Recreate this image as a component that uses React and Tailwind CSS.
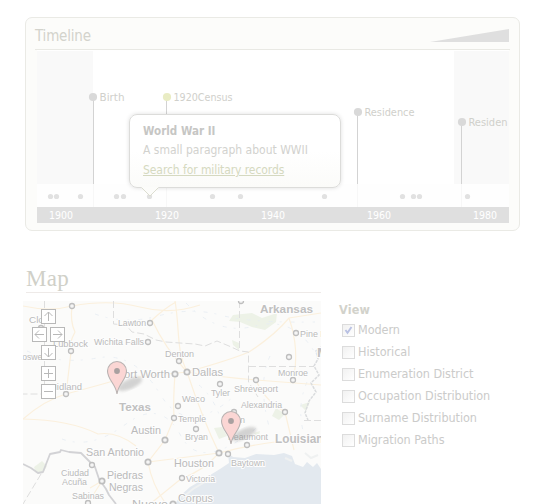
const sans = "font-['DejaVu_Sans_Condensed','DejaVu_Sans',sans-serif] [font-stretch:condensed]";

const events = [
  { x: 93, y: 97, label: 'Birth', w: 25, color: '#d9d9d9' },
  { x: 167, y: 97, label: '1920Census', w: 59, color: '#e9ecc4' },
  { x: 358, y: 112, label: 'Residence', w: 50, color: '#d9d9d9' },
  { x: 462, y: 122, label: 'Residen', w: 39, color: '#d9d9d9' },
];
const dots = [50.5, 56.5, 80.5, 116.5, 123.5, 149.5, 212.5, 240.5, 324.5, 402.5, 413.5, 419.5, 467.5];
const years = [[49, '1900'], [155, '1920'], [261, '1940'], [367, '1960'], [473, '1980']];

function TimelineChart() {
  return (
    <svg className="block font-['DejaVu_Sans_Condensed','DejaVu_Sans',sans-serif] [font-stretch:condensed]" width="472" height="173" viewBox="37 50 472 173">
      <rect x="37" y="50" width="472" height="173" fill="#fff" />
      <rect x="37" y="51" width="56" height="133" fill="#f9f9f9" />
      <rect x="454" y="51" width="55" height="133" fill="#f9f9f9" />
      <rect x="37" y="184" width="472" height="23" fill="#fefefe" />
      <rect x="37" y="207" width="472" height="16" fill="#dfdfdf" />
      {events.map((e) => (
        <g key={e.x}>
          <rect x={e.x === 93 ? 93 : e.x === 167 ? 166 : e.x - 1} y={e.y} width="1" height={184 - e.y} fill="#d3d3d3" />
          <rect x={e.x === 93 ? 93 : e.x - 1} y="184" width="1" height="23" fill="#f7f7f7" />
          <circle cx={e.x} cy={e.y} r="4.1" fill={e.color} />
          <text x={e.x + 6.5} y={e.y + 4} fontSize="11.3" textLength={e.w} lengthAdjust="spacingAndGlyphs" fill="#d0d0cb">{e.label}</text>
        </g>
      ))}
      {dots.map((x) => <circle key={x} cx={x} cy="196.500" r="2.600" fill="#e1e1e1" />)}
      {years.map(([x, y]) => <text key={x} x={x} y="219" fontSize="11.3" textLength="24" lengthAdjust="spacingAndGlyphs" fill="#fff">{y}</text>)}
    </svg>
  );
}

function Callout() {
  return (
    <div className={`absolute left-[103px] top-[96px] h-[74px] w-[212px] rounded-lg border border-[#dcdcda] bg-linear-to-b from-white from-50% to-[#fbfbf9] pl-[13px] pt-[8px] text-[12px] shadow-[0_0_4px_rgba(0,0,0,0.13)] ${sans}`}>
      <p className="h-[18px] text-[11.5px] font-bold leading-[17px] tracking-[0.02px] text-[#c6c6c4]">World War II</p>
      <p className="h-[20px] whitespace-nowrap leading-[18px] text-[#d2d2ce]">A small paragraph about WWII</p>
      <a className="block h-[20px] w-fit whitespace-nowrap leading-[18px] tracking-[-0.08px] text-[#d5d9c0] underline underline-offset-1">Search for military records</a>
      <svg className="absolute left-[10px] top-[72px]" width="20" height="11" viewBox="0 0 20 11">
        <path d="M1 0 L10 9 L19 0Z" fill="#fcfcfa" />
        <path d="M1.500 .5 L10 9 L18.500 .5" fill="none" stroke="#dcddd0" />
      </svg>
    </div>
  );
}

// x, baseline, text width, font size, label, bold
const places = [
  [29, 323, 27, 9.5, 'Clovis'], [118, 326, 28, 9.5, 'Lawton'], [94, 345, 50, 9.5, 'Wichita Falls'],
  [53, 347, 35, 9.5, 'Lubbock'], [16, 360, 30, 9.5, 'Roswell'], [117, 378, 53, 11, 'Fort Worth'],
  [49, 390, 33, 9.5, 'Midland'], [260, 313, 53, 11, 'Arkansas', true], [300, 337, 38, 9.5, 'Pine Bluff'],
  [165, 357, 29, 9.5, 'Denton'], [192, 376, 31, 11, 'Dallas'], [278, 376, 30, 9.5, 'Monroe'],
  [234, 392, 44, 9.5, 'Shreveport'], [211, 396, 19, 9.5, 'Tyler'], [182, 402, 23, 9.5, 'Waco'],
  [119, 411, 32, 11, 'Texas', true], [131, 434, 30, 11, 'Austin'], [86, 456, 58, 11, 'San Antonio'],
  [61, 476, 28, 9, 'Ciudad'], [62, 485, 25, 9, 'Acuña'], [107, 479, 36, 11, 'Piedras'],
  [109, 491, 34, 11, 'Negras'], [72, 499, 32, 9.5, 'Sabinas'], [132, 508, 36, 11, 'Nuevo'],
  [178, 422, 28, 9.5, 'Temple'], [185, 440, 23, 9.5, 'Bryan'], [241, 408, 41, 9.5, 'Alexandria'],
  [228, 440, 40, 9.5, 'Beaumont'], [275, 443, 55, 12, 'Louisiana', true], [174, 467, 40, 11, 'Houston'],
  [231, 466, 34, 9.5, 'Baytown'], [186, 482, 29, 9.5, 'Victoria'], [178, 502, 35, 11, 'Corpus'],
  [240, 423, 5, 9.5, 'n'], [317, 357, 12, 12, 'M', true],
];
const towns = [
  [72, 306], [41, 328], [150, 323], [148, 342], [71, 351], [66, 394], [241, 301], [296, 333], [289, 357],
  [179, 361], [256, 380], [293, 380], [220, 384], [178, 406], [174, 418], [196, 429], [234, 412], [285, 412],
  [247, 445], [228, 454], [182, 478], [92, 465], [88, 503],
];
const cities = [[175, 374], [187, 372], [165, 440], [148, 462], [102, 481], [219, 453], [173, 504]];
const roads = [
  'M23 306 Q50 312 72 306 Q110 299 140 307 T200 305', 'M72 306 Q70 322 75 332 Q68 345 71 352 L66 394',
  'M187 372 Q165 348 152 320 Q165 308 176 302', 'M175 301 C180 330 176 350 187 372 Q230 360 249 352 Q275 335 289 318 L321 313',
  'M23 419 Q45 400 66 394 Q100 385 120 379 L187 372', 'M23 419 Q70 420 98 434 Q117 431 136 446',
  'M187 372 Q220 377 256 380 L321 385', 'M175 374 Q173 400 174 418 L165 440 L148 462 Q180 458 219 453',
  'M187 372 Q203 420 219 453 Q245 446 275 442 L321 443', 'M148 462 Q152 485 166 504', 'M289 318 Q300 350 293 380',
  'M219 453 Q202 472 182 478 L150 504', 'M256 380 Q264 400 285 412 L294 450', 'M102 481 L90 488 M88 503 L102 481',
];

function Pin({ x, y }) {
  return (
    <g transform={`translate(${x} ${y})`}>
      <ellipse cx="13" cy="-10" rx="13" ry="5" transform="rotate(-24 13 -10)" fill="#777" opacity=".3" filter="url(#soft)" />
      <path d="M0 0 C-1 -10 -9.500 -14 -9.500 -23 A9.500 9.500 0 0 1 9.500 -23 C9.500 -14 1 -10 0 0Z" fill="#fbd6d4" stroke="#b9b3b2" strokeWidth="1.100" />
      <circle cy="-23" r="2.900" fill="#a9a0a0" />
    </g>
  );
}

function MapButton({ x, y, d }) {
  return (
    <g transform={`translate(${x} ${y})`} fill="none" stroke="#b8b8b8">
      <rect x=".5" y=".5" width="14" height="14" fill="#fff" />
      <path d={d} />
    </g>
  );
}

function TexasMap() {
  return (
    <svg className="mt-[8px] block font-['Liberation_Sans',Arial,sans-serif]" width="298" height="203" viewBox="23 301 298 203">
      <defs><filter id="soft"><feGaussianBlur stdDeviation="1.6" /></filter></defs>
      <rect x="23" y="301" width="298" height="203" fill="#fbfbfa" />
      <g fill="#edf2e7">
        <path d="M233 315 L252 313 L262 318 L277 313 L276 322 L265 330 L252 327 L240 322 L229 321Z" />
        <path d="M232 340 L239 343 L239 350 L233 345Z M214 428 L222 427 L227 436 L219 439Z M276 408 L285 414 L279 420 L272 416Z M34 467 L42 461 L47 466 L43 473 L36 473Z M254 433 L260 431 L258 440Z M300 405 L310 402 L306 411Z" />
      </g>
      <path d="M175 504 L180 496 L190 487 L207 477 L220 469 L229 463 L228 453 L233 457 L245 458 L256 454 L274 455 L284 453 L292 456 L295 464 L303 467 L307 462 L313 467 L317 463 L321 469 V504Z" fill="#e3e9ef" />
      <path d="M182 498 L193 489 L210 479 M285 458 L292 461 M305 453 L311 458 L318 455" fill="none" stroke="#eff1f1" strokeWidth="2" />
      <g fill="none" stroke="#e6ecf2" strokeWidth=".8" strokeDasharray="4 7 2 9">
        <path d="M95 314 Q125 325 158 316 T220 315 T315 322" />
        <path d="M27 351 Q60 365 97 358 T160 394 T232 398" />
        <path d="M186 303 Q218 336 255 326 T314 351" />
        <path d="M62 439 Q91 450 126 424 T181 436 T260 425" />
        <path d="M307 382 Q294 412 308 446 M270 356 Q257 384 270 430 M199 385 Q218 401 224 432" />
      </g>
      <g fill="none" stroke="#fbf0dd" strokeWidth="1.200">{roads.map((d) => <path key={d} d={d} />)}</g>
      <g fill="none" stroke="#dedede" strokeWidth="1" strokeDasharray="7 3">
        <path d="M44.500 301 V394 H23 M113.500 301 V324 L126 325 L132 332 L144 334 L156 340 L166 342 L180 343 L195 344 L205 346 L217 341 L229 346 L240 351 L248.500 352 V382 L258 397 M249 366.500 H314 M239.500 301 V350 M304 420.500 H321 M41 474 L23 504" />
      </g>
      <path d="M321 347 L316 351 L318 359 L314 366 L319 375 L311 383 L316 392 L309 401 L305 413 L308 420" fill="none" stroke="#dadcde" strokeWidth="1.500" strokeDasharray="3 1" />
      <path d="M23 464 L31 468 L38 473 L43 472 L50 454 L60 452 L61 450 L69 452 L81 453 L89 461 L95 467 L99 479 L106 489 L109 495 L116 504" fill="none" stroke="#d2d2d5" strokeWidth="1.800" strokeLinejoin="round" />
      <g fill="#f5f5f5" stroke="#bebebe" strokeWidth="1.300">
        {towns.map(([x, y]) => <circle key={`${x}-${y}`} cx={x} cy={y} r="2.500" />)}
        {cities.map(([x, y]) => <circle key={`${x}-${y}`} cx={x} cy={y} r="2.700" strokeWidth="1.700" />)}
      </g>
      {places.map(([x, y, w, size, label, bold]) => (
        <text key={label} x={x} y={y} fontSize={size} textLength={w} lengthAdjust="spacingAndGlyphs" fontWeight={bold ? 700 : 400} fill={bold ? '#c0c0c0' : '#bababa'} stroke="#fdfdfd" strokeWidth="2" paintOrder="stroke">{label}</text>
      ))}
      <Pin x={117} y={394} />
      <Pin x={231} y={444} />
      <MapButton x={41} y={309} d="M7.500 3 V12 M3.500 7 L7.500 3 L11.500 7" />
      <MapButton x={32} y={327} d="M3 7.500 H12 M7 3.500 L3 7.500 L7 11.500" />
      <MapButton x={50} y={327} d="M3 7.500 H12 M8 3.500 L12 7.500 L8 11.500" />
      <MapButton x={41} y={345} d="M7.500 3 V12 M3.500 8 L7.500 12 L11.500 8" />
      <MapButton x={41} y={366} d="M3 7.500 H12 M7.500 3 V12" />
      <MapButton x={41} y={384} d="M3 7.500 H12" />
    </svg>
  );
}

const layers = ['Modern', 'Historical', 'Enumeration District', 'Occupation Distribution', 'Surname Distribution', 'Migration Paths'];

export default function App() {
  return (
    <main className="h-[504px] w-[544px] overflow-hidden bg-white pl-[23px] pt-[17px]">
      <section className="relative ml-[2px] h-[214px] w-[495px] rounded-[7px] border border-[#eaeae5] bg-[#fcfcfa]">
        <header className="ml-[9px] flex h-[32px] w-[475px] justify-between border-b border-[#e9e9e4]">
          <h1 className={`pt-[8px] text-[15px] leading-[20px] tracking-[-0.2px] text-[#d3d3cc] ${sans}`}>Timeline</h1>
          <svg className="mr-[1px] mt-[11px]" width="79" height="13"><path d="M0 13 L79 0 V13Z" fill="#dfdfdf" /></svg>
        </header>
        <div className="ml-[11px]"><TimelineChart /></div>
        <Callout />
      </section>
      <div className="flex pt-[32px]">
        <section className="w-[298px]">
          <h2 className="ml-[3px] h-[30px] border-b border-[#eeeae8] font-['Liberation_Serif',serif] text-[23px] leading-[32px] tracking-[0.3px] text-[#d0d0c8]">Map</h2>
          <TexasMap />
        </section>
        <section className={`ml-[18px] pt-[37px] text-[12.5px] text-[#cbcbca] ${sans}`}>
          <h3 className="h-[19px] leading-[20px] font-bold tracking-[0.15px] text-[#d2d2cb]">View</h3>
          {layers.map((name, i) => (
            <label key={name} className="ml-[3px] flex h-[22px] items-center whitespace-nowrap leading-[22px] tracking-[-0.04px]">
              <span className="mr-[3px] flex size-[13px] items-center justify-center border border-[#dcdcdc] bg-linear-to-br from-[#f1f1f1] to-white">
                {i === 0 && <svg width="9" height="9" viewBox="0 0 9 9"><path d="M1.500 4 L3.500 6.800 L7.500 1" fill="none" stroke="#b9c1e3" strokeWidth="1.900" /></svg>}
              </span>
              {name}
            </label>
          ))}
        </section>
      </div>
    </main>
  );
}
